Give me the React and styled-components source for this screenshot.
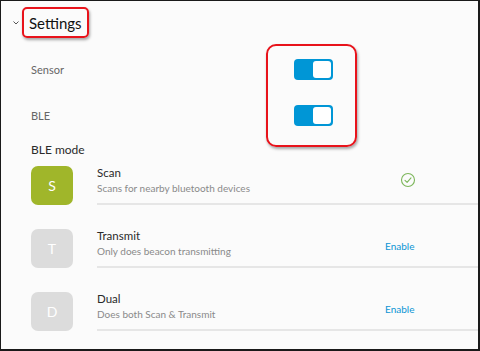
import React from 'react';
import styled, {createGlobalStyle} from 'styled-components';

const Global = createGlobalStyle`
  html, body { margin: 0; padding: 0; background: #fff; }
  body { font-family: Lato, "Liberation Sans", sans-serif; }
`;

const Frame = styled.div`
  box-sizing: border-box;
  width: 480px;
  height: 351px;
  overflow: hidden;
  background: #fbfbfb;
  border-style: solid;
  border-color: #1a1a1a;
  border-width: 1px 2px 2px 1px;
`;

const Header = styled.div`
  display: flex;
  align-items: center;
  height: 43px;
  padding-left: 12px;
  gap: 3px;
`;

const Title = styled.h1`
  margin: 0;
  box-sizing: border-box;
  height: 31px;
  display: inline-flex;
  align-items: center;
  padding: 0 5px 0 5px;
  border: 2px solid #e8131b;
  border-radius: 5px;
  box-shadow: 1px 2px 3px rgba(0, 0, 0, 0.35);
  font-size: 15px;
  font-weight: 400;
  color: #111;
`;

const Body = styled.div`
  padding-left: 30px;
`;

const SettingsGroup = styled.div`
  position: relative;
  margin-top: 2px;
`;

const SettingRow = styled.div`
  display: grid;
  grid-template-columns: 263px auto;
  align-items: center;
  height: 46px;
`;

const Label = styled.span`
  font-size: 11px;
  color: #666;
`;

const Toggle = styled.div`
  box-sizing: border-box;
  width: 39px;
  height: 21px;
  border-radius: 4px;
  background: #0096d6;
  padding: 2px;
  display: flex;
  justify-content: flex-end;
  &::after {
    content: '';
    width: 18px;
    height: 17px;
    border-radius: 3px;
    background: #fff;
  }
`;

const Callout = styled.div`
  position: absolute;
  left: 235px;
  top: -2px;
  width: 91px;
  height: 103px;
  box-sizing: border-box;
  border: 2px solid #e8131b;
  border-radius: 10px;
  box-shadow: 1px 2px 3px rgba(0, 0, 0, 0.35);
  pointer-events: none;
`;

const GroupTitle = styled.div`
  font-size: 12px;
  color: #2a2a2a;
  line-height: 14px;
  margin: 5px 0 9px;
`;

const ModeRow = styled.div`
  display: flex;
  margin-bottom: 24px;
`;

const Avatar = styled.div`
  flex: none;
  width: 42px;
  height: 39px;
  border-radius: 7px;
  background: ${p => (p.active ? '#a0b62a' : '#dcdcdc')};
  color: #fff;
  display: flex;
  align-items: center;
  justify-content: center;
  font-size: 14px;
  margin-right: 24px;
`;

const ModeInfo = styled.div`
  flex: 1;
  box-sizing: border-box;
  height: 39px;
  border-bottom: 2px solid #e6e6e6;
  display: flex;
`;

const ModeText = styled.div`
  flex: 1;
`;

const ModeName = styled.div`
  font-size: 11.5px;
  line-height: 14px;
  color: #2a2a2a;
`;

const ModeDesc = styled.div`
  font-size: 10px;
  line-height: 14px;
  margin-top: 1px;
  color: #8a8a8a;
`;

const Action = styled.div`
  width: 93px;
  padding-top: 11px;
  font-size: 10px;
  color: #0b95d4;
`;

const Check = styled.svg`
  display: block;
  margin: -5px 0 0 15px;
`;

const CheckIcon = () => (
  <Check width="16" height="16" viewBox="0 0 16 16">
    <circle cx="8" cy="8" r="6.5" fill="none" stroke="#7cb65a" strokeWidth="1.1" />
    <path d="M5 8.3 L7.1 10.3 L11 5.9" fill="none" stroke="#7cb65a" strokeWidth="1.1" strokeLinecap="round" strokeLinejoin="round" />
  </Check>
);

const modes = [
  {letter: 'S', name: 'Scan', desc: 'Scans for nearby bluetooth devices', active: true},
  {letter: 'T', name: 'Transmit', desc: 'Only does beacon transmitting'},
  {letter: 'D', name: 'Dual', desc: 'Does both Scan & Transmit'},
];

export default function App() {
  return (
    <Frame>
      <Global />
      <Header>
        <svg width="6" height="6" viewBox="0 0 6 6">
          <path d="M0.5 1.5 L3 4 L5.5 1.5" fill="none" stroke="#555" strokeWidth="1" />
        </svg>
        <Title>Settings</Title>
      </Header>
      <Body>
        <SettingsGroup>
          <SettingRow>
            <Label>Sensor</Label>
            <Toggle />
          </SettingRow>
          <SettingRow>
            <Label>BLE</Label>
            <Toggle />
          </SettingRow>
          <Callout />
        </SettingsGroup>
        <GroupTitle>BLE mode</GroupTitle>
        {modes.map(m => (
          <ModeRow key={m.name}>
            <Avatar active={m.active}>{m.letter}</Avatar>
            <ModeInfo>
              <ModeText>
                <ModeName>{m.name}</ModeName>
                <ModeDesc>{m.desc}</ModeDesc>
              </ModeText>
              <Action>{m.active ? <CheckIcon /> : 'Enable'}</Action>
            </ModeInfo>
          </ModeRow>
        ))}
      </Body>
    </Frame>
  );
}
